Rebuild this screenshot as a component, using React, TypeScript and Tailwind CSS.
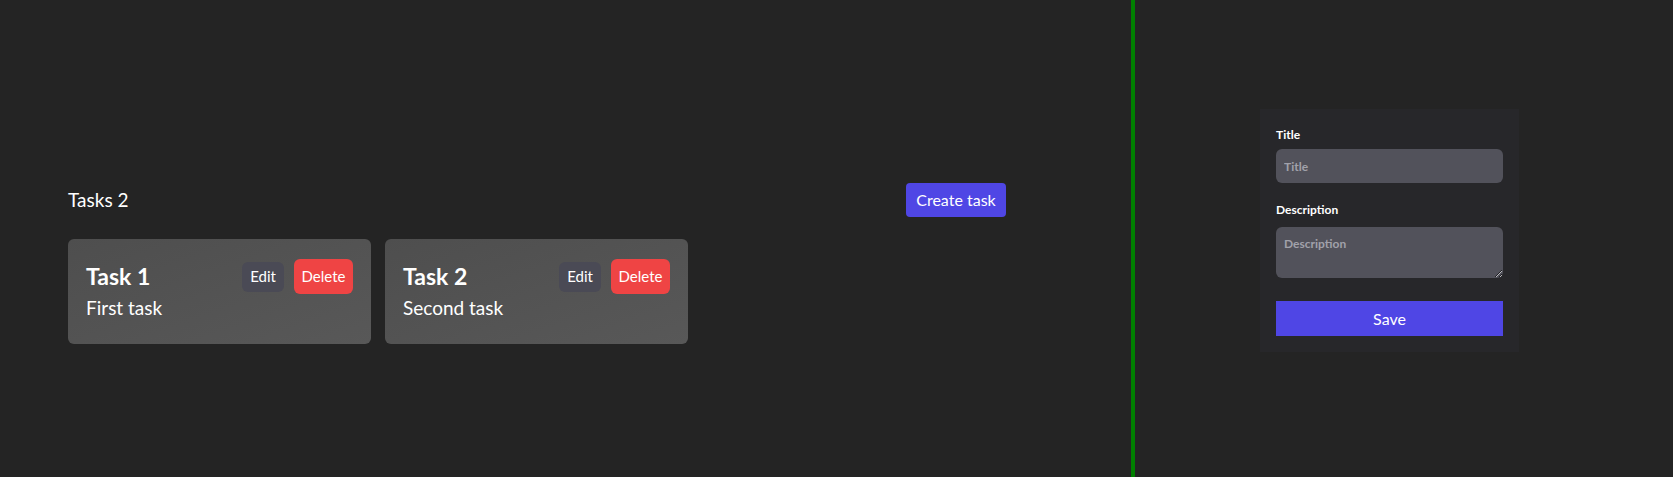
import { useState } from "react";

type Task = { id: number; title: string; description: string };

const initialTasks: Task[] = [
  { id: 1, title: "Task 1", description: "First task" },
  { id: 2, title: "Task 2", description: "Second task" },
];

function TaskCard({ task }: { task: Task }) {
  return (
    <div className="w-[303px] h-[105px] rounded-md bg-gradient-to-br from-[#4e4e4e] to-[#585858] px-[18px] pt-[20px] text-white">
      <div className="flex items-center justify-between h-[35px]">
        <h3 className="text-[23px] font-bold leading-none">{task.title}</h3>
        <div className="flex items-center gap-[10px]">
          <button className="h-[30px] px-[8px] rounded-md bg-[#4a4a55] text-[15px] text-white">
            Edit
          </button>
          <button className="h-[35px] w-[59px] rounded-md bg-[#ef4444] text-[15px] text-white">
            Delete
          </button>
        </div>
      </div>
      <p className="mt-0 text-[19px] leading-7">{task.description}</p>
    </div>
  );
}

export default function App() {
  const [tasks] = useState<Task[]>(initialTasks);

  return (
    <div className="flex h-[477px] w-full bg-[#242424] text-white font-['Lato',sans-serif]">
      {/* Список задач */}
      <div className="w-[1135px] shrink-0 border-r-4 border-[#008000] pl-[68px] pt-[183px]">
        <div className="w-[938px]">
          <div className="flex items-center justify-between h-[34px]">
            <span className="text-[19px]">Tasks {tasks.length}</span>
            <button className="h-[34px] w-[100px] rounded-sm bg-[#4f46e5] text-[16px] text-white">
              Create task
            </button>
          </div>
          <div className="mt-[22px] flex gap-[14px]">
            {tasks.map((t) => (
              <TaskCard key={t.id} task={t} />
            ))}
          </div>
        </div>
      </div>

      {/* Форма */}
      <div className="flex-1 pl-[125px] pt-[109px]">
        <form className="w-[259px] bg-[#27272a] px-4 pt-[18px] pb-4 flex flex-col">
          <label className="text-[12px] font-bold leading-4">Title</label>
          <input
            placeholder="Title"
            className="mt-[6px] h-[34px] w-full rounded-md bg-[#52525b] px-2 text-[12px] font-bold text-white placeholder:text-[#a1a1aa] outline-none"
          />
          <label className="mt-[19px] text-[12px] font-bold leading-4">Description</label>
          <textarea
            placeholder="Description"
            className="mt-[9px] h-[51px] w-full rounded-md bg-[#52525b] px-2 py-2 text-[12px] font-bold text-white placeholder:text-[#a1a1aa] outline-none"
          />
          <button
            type="button"
            className="mt-[23px] h-[35px] w-full bg-[#4f46e5] text-[16px] text-white"
          >
            Save
          </button>
        </form>
      </div>
    </div>
  );
}
